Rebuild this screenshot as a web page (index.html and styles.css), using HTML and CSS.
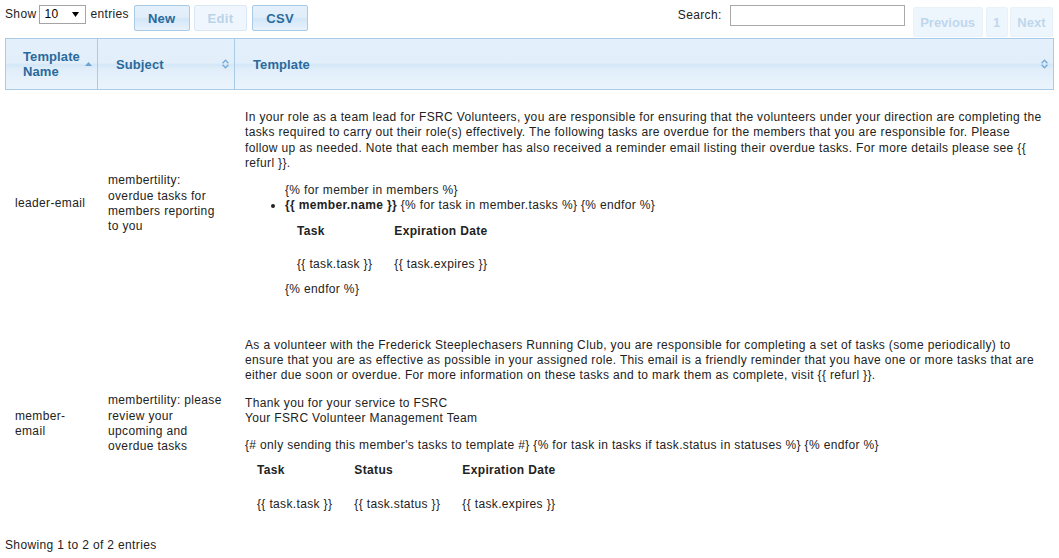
FILE: index.html
```html
<!DOCTYPE html>
<html>
<head>
<meta charset="utf-8">
<title>Email Templates</title>
<link rel="stylesheet" href="styles.css">
</head>
<body>
<div class="toolbar">
  <div class="tools-left">
    <div class="length">
      <span>Show</span>
      <div class="select"><span>10</span><svg width="7" height="5" viewBox="0 0 7 5"><polygon points="0,0 7,0 3.5,5" fill="#000"/></svg></div>
      <span>entries</span>
    </div>
    <button class="btn">New</button>
    <button class="btn disabled">Edit</button>
    <button class="btn">CSV</button>
  </div>
  <div class="tools-right">
    <label class="search">Search:<input type="text"></label>
    <div class="paginate">
      <span class="pbtn">Previous</span>
      <span class="pbtn">1</span>
      <span class="pbtn">Next</span>
    </div>
  </div>
</div>

<table class="grid">
  <colgroup>
    <col class="c-name">
    <col class="c-subject">
    <col class="c-template">
  </colgroup>
  <thead>
    <tr>
      <th class="first"><div class="th-in"><span>Template Name</span><svg class="ico" width="7" height="4" viewBox="0 0 7 4"><polygon points="0,4 3.5,0 7,4" fill="#6fa3d2"/></svg></div></th>
      <th><div class="th-in"><span>Subject</span><svg class="ico" width="7" height="10" viewBox="0 0 7 10"><path d="M0.6 4.2 L3.5 1.2 L6.4 4.2 M0.6 5.8 L3.5 8.8 L6.4 5.8" fill="none" stroke="#74a9d8" stroke-width="1.3"/></svg></div></th>
      <th><div class="th-in"><span>Template</span><svg class="ico" width="7" height="10" viewBox="0 0 7 10"><path d="M0.6 4.2 L3.5 1.2 L6.4 4.2 M0.6 5.8 L3.5 8.8 L6.4 5.8" fill="none" stroke="#74a9d8" stroke-width="1.3"/></svg></div></th>
    </tr>
  </thead>
  <tbody>
    <tr>
      <td>leader-email</td>
      <td>membertility: overdue tasks for members reporting to you</td>
      <td class="tpl">
        <p>In your role as a team lead for FSRC Volunteers, you are responsible for ensuring that the volunteers under your direction are completing the tasks required to carry out their role(s) effectively. The following tasks are overdue for the members that you are responsible for. Please follow up as needed. Note that each member has also received a reminder email listing their overdue tasks. For more details please see {{ refurl }}.</p>
        <ul>{% for member in members %}
          <li><b>{{ member.name }}</b> {% for task in member.tasks %} {% endfor %}
            <table class="inner">
              <thead><tr><th>Task</th><th>Expiration Date</th></tr></thead>
              <tbody><tr><td>{{ task.task }}</td><td>{{ task.expires }}</td></tr></tbody>
            </table>
            {% endfor %}
          </li>
        </ul>
      </td>
    </tr>
    <tr>
      <td>member-email</td>
      <td>membertility: please review your upcoming and overdue tasks</td>
      <td class="tpl">
        <p>As a volunteer with the Frederick Steeplechasers Running Club, you are responsible for completing a set of tasks (some periodically) to ensure that you are as effective as possible in your assigned role. This email is a friendly reminder that you have one or more tasks that are either due soon or overdue. For more information on these tasks and to mark them as complete, visit {{ refurl }}.</p>
        <p>Thank you for your service to FSRC<br>Your FSRC Volunteer Management Team</p>
        {# only sending this member's tasks to template #} {% for task in tasks if task.status in statuses %} {% endfor %}
        <table class="inner">
          <thead><tr><th>Task</th><th>Status</th><th>Expiration Date</th></tr></thead>
          <tbody><tr><td>{{ task.task }}</td><td>{{ task.status }}</td><td>{{ task.expires }}</td></tr></tbody>
        </table>
      </td>
    </tr>
  </tbody>
</table>

<div class="info">Showing 1 to 2 of 2 entries</div>
</body>
</html>
```

FILE: styles.css
```css
html, body {
  margin: 0;
  padding: 0;
  background: #fff;
}
body {
  padding: 0 5px;
  font-family: "Liberation Sans", Arial, sans-serif;
  font-size: 12px;
  line-height: 15.3px;
  color: #222;
  letter-spacing: 0.35px;
}

/* toolbar */
.toolbar {
  display: flex;
  justify-content: space-between;
  align-items: flex-start;
  height: 38px;
  line-height: 15px;
}
.tools-left {
  display: flex;
  align-items: flex-start;
}
.length {
  display: flex;
  align-items: center;
  height: 19px;
  margin-top: 5px;
}
.select {
  box-sizing: border-box;
  width: 47px;
  height: 19px;
  margin: 0 4px 0 3px;
  padding: 0 6px 0 4px;
  border: 1px solid #a4a4a4;
  display: flex;
  align-items: center;
  justify-content: space-between;
  background: #fff;
  color: #000;
}
.btn {
  box-sizing: border-box;
  height: 26px;
  margin: 5px 0 0 4px;
  padding: 0 13px;
  border: 1px solid #a9cbe6;
  border-radius: 2px;
  background: linear-gradient(#e4f0fb 0%, #e1eefa 46%, #d3e7f8 54%, #e8f2fc 100%);
  color: #2a6a9c;
  font-family: "Liberation Sans", Arial, sans-serif;
  font-size: 13px;
  font-weight: bold;
  letter-spacing: 0.3px;
  line-height: 15px;
}
.length + .btn {
  margin-left: 5px;
}
.btn.disabled {
  background: #eff6fd;
  border-color: #d8e8f6;
  color: #b9d3ea;
}
.btn.disabled + .btn {
  margin-left: 5px;
}

.tools-right {
  display: flex;
  align-items: flex-start;
}
.search {
  display: flex;
  align-items: center;
  height: 21px;
  margin-top: 5px;
}
.search input {
  box-sizing: border-box;
  width: 175px;
  height: 21px;
  margin: 0 0 0 8px;
  border: 1px solid #a9a9a9;
  padding: 1px 3px;
  font: inherit;
}
.paginate {
  display: flex;
  margin: 7px 1px 0 8px;
  gap: 2px;
}
.pbtn {
  box-sizing: border-box;
  height: 30px;
  padding: 0 6.5px;
  display: flex;
  align-items: center;
  border: 1px solid #e9f2fb;
  border-radius: 2px;
  background: #eef6fd;
  color: #bfd7ed;
  font-size: 13px;
  font-weight: bold;
  letter-spacing: 0;
}
.pbtn:first-child {
  margin-right: 1px;
}

/* main grid */
.grid {
  width: 1049px;
  table-layout: fixed;
  border-collapse: separate;
  border-spacing: 0;
}
.c-name { width: 93px; }
.c-subject { width: 137px; }
.c-template { width: 819px; }

.grid > thead > tr > th {
  height: 30px;
  padding: 10px 5px 10px 18px;
  border-top: 1px solid #a9cbe6;
  border-bottom: 1px solid #a9cbe6;
  border-right: 1px solid #a9cbe6;
  background: linear-gradient(#e4f0fb 0%, #e2effa 47%, #d3e7f8 52%, #e1eefa 60%, #ebf4fc 100%);
  color: #2a6a9c;
  font-size: 13px;
  font-weight: bold;
  line-height: 15px;
  text-align: left;
  letter-spacing: 0.1px;
  vertical-align: middle;
}
.grid > thead > tr > th.first {
  border-left: 1px solid #a9cbe6;
  padding-left: 17px;
}
.th-in {
  display: flex;
  align-items: center;
  justify-content: space-between;
  gap: 4px;
}
.ico {
  flex: none;
  display: block;
}

.grid > tbody > tr > td {
  padding: 8px 10px;
  vertical-align: middle;
  text-align: left;
}
.tpl p {
  margin: 12px 0;
}
.tpl ul {
  margin: 12px 0;
  padding-left: 40px;
}

.inner {
  border-collapse: separate;
  border-spacing: 2px;
  margin: 0;
}
.inner th,
.inner td {
  padding: 8px 10px;
  text-align: left;
  vertical-align: middle;
}
.inner th {
  font-weight: bold;
}

.info {
  margin-top: 8px;
}
```
